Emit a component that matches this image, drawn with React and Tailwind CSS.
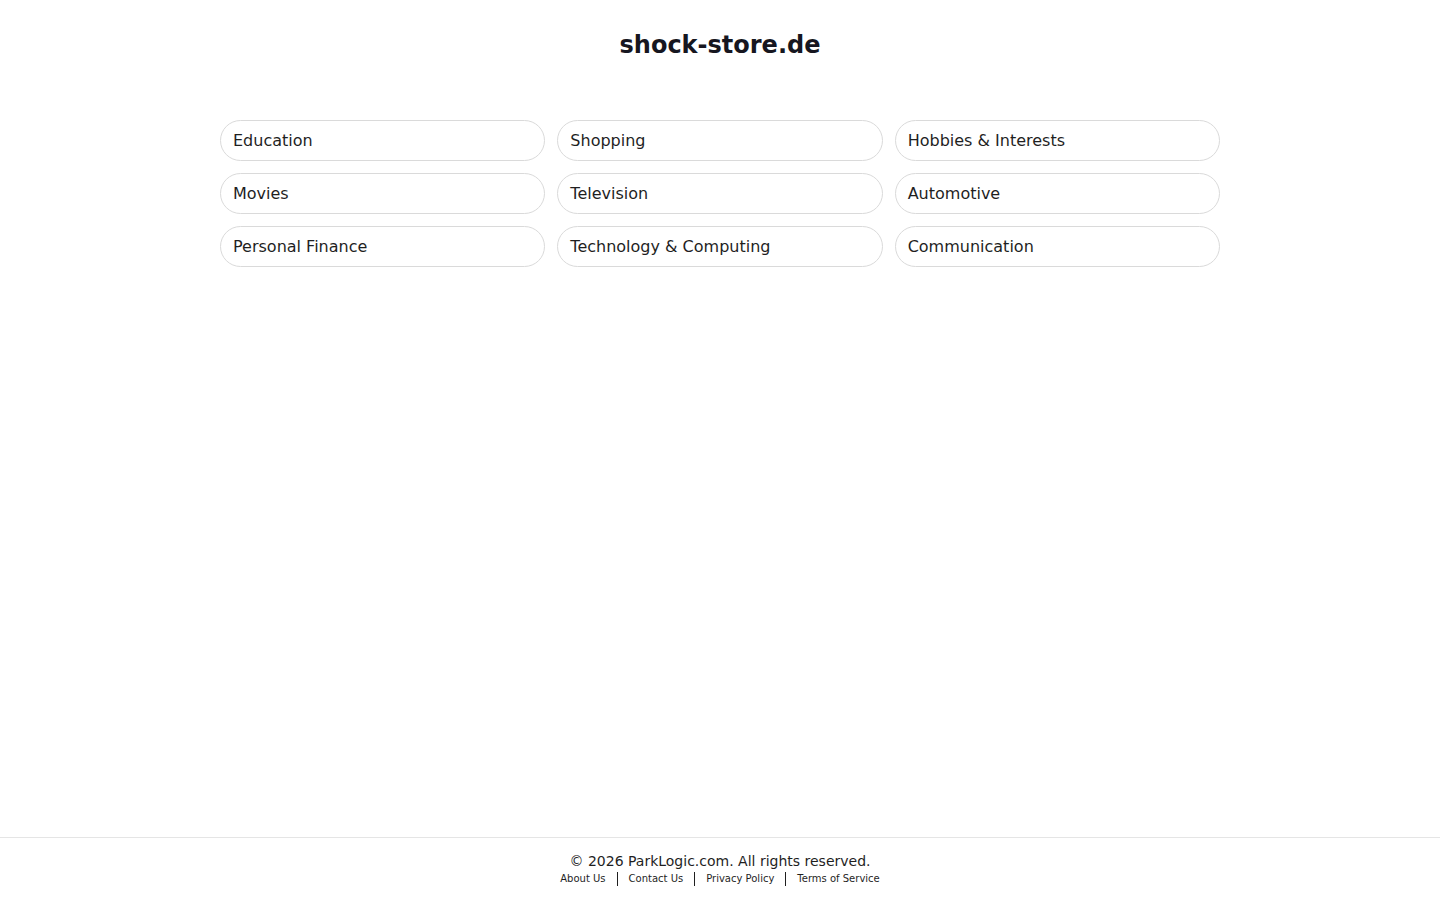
import React from "react";

const categories = [
  "Education",
  "Shopping",
  "Hobbies & Interests",
  "Movies",
  "Television",
  "Automotive",
  "Personal Finance",
  "Technology & Computing",
  "Communication",
];

const links = ["About Us", "Contact Us", "Privacy Policy", "Terms of Service"];

const App = () => {
  return (
    <div
      className="flex min-h-screen w-full flex-col bg-white text-[#1f1f1f]"
      style={{ fontFamily: '"DejaVu Sans", sans-serif' }}
    >
      <main className="flex flex-1 flex-col items-center">
        <h1 className="pt-[29px] text-[24px] font-bold leading-[32px] text-[#161620]">
          shock-store.de
        </h1>
        <div className="mt-[59px] grid w-[1000px] grid-cols-3 gap-x-[12px] gap-y-[12px]">
          {categories.map((cat) => (
            <a
              key={cat}
              href="#"
              className="flex h-[41px] items-center rounded-full border border-[#dadada] px-[12px] text-[16px] text-[#1f1f1f]"
            >
              {cat}
            </a>
          ))}
        </div>
      </main>
      <footer className="flex h-[63px] flex-col items-center border-t border-[#e5e5e5] pt-[13px]">
        <p className="text-[14px] leading-[20px] text-[#1f1f1f]">
          © 2026 ParkLogic.com. All rights reserved.
        </p>
        <div className="flex items-center text-[10px] leading-[16px] text-[#1f1f1f]">
          {links.map((l, i) => (
            <React.Fragment key={l}>
              {i > 0 && <span className="mx-[11px] h-[14px] border-l border-[#1f1f1f]" />}
              <a href="#">{l}</a>
            </React.Fragment>
          ))}
        </div>
      </footer>
    </div>
  );
};

export default App;
